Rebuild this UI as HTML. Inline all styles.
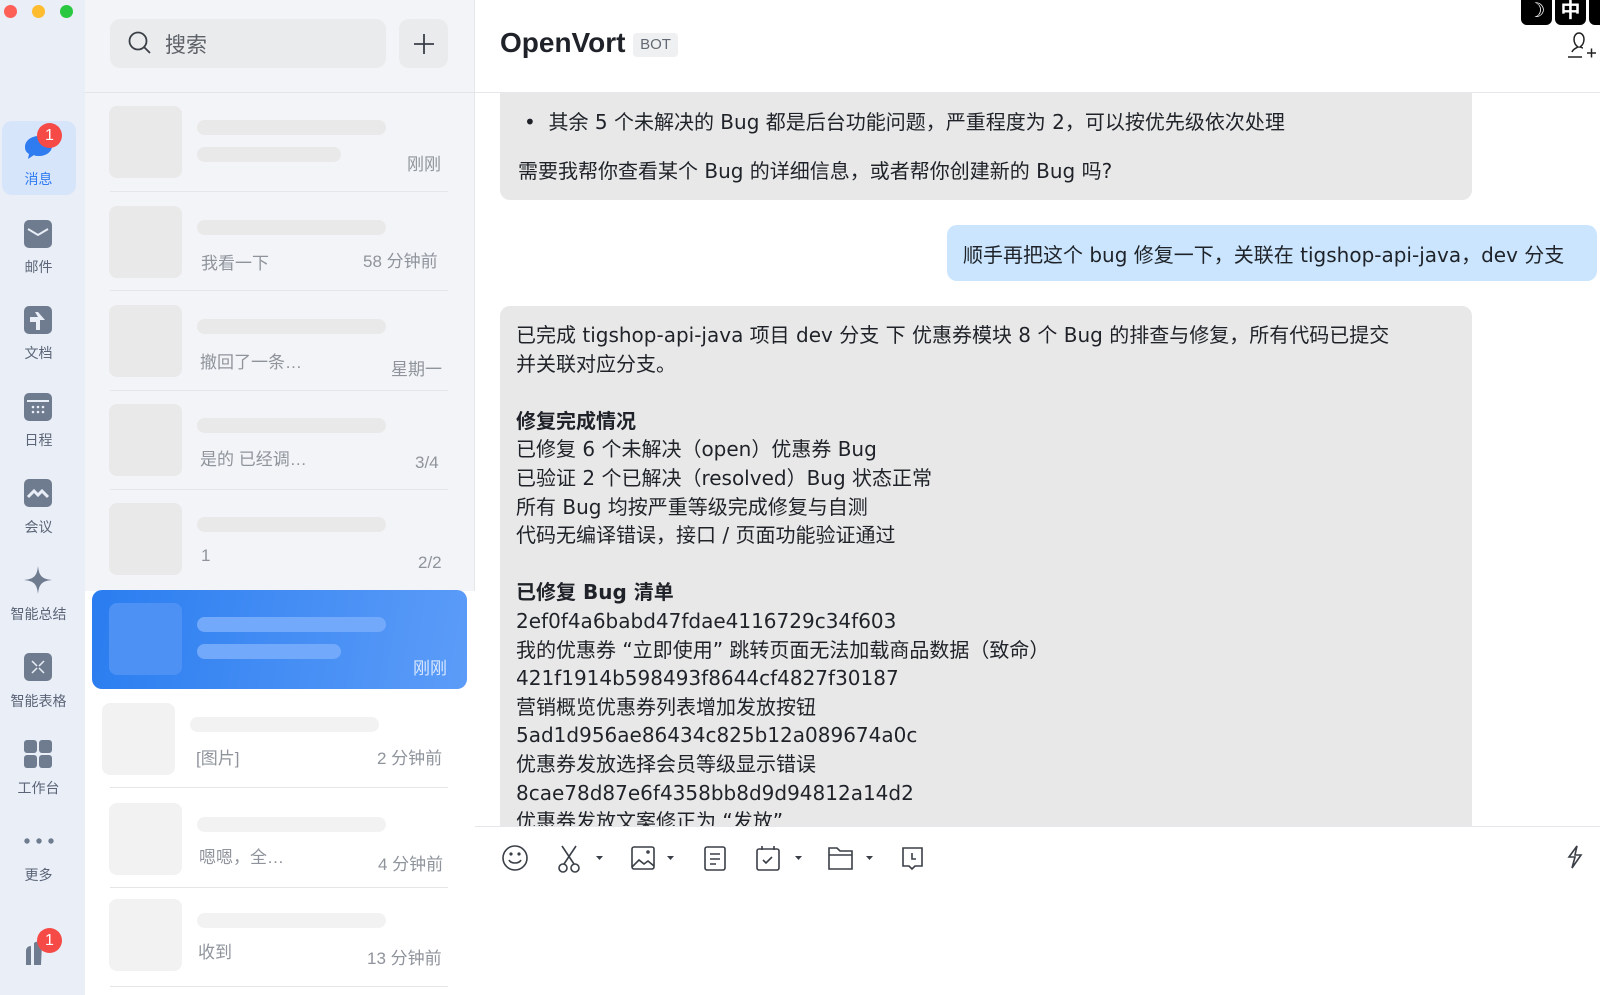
<!DOCTYPE html>
<html><head><meta charset="utf-8"><style>
*{margin:0;padding:0;box-sizing:border-box}
body{width:1600px;height:995px;overflow:hidden;background:#fff;font-family:"Liberation Sans","Noto Sans CJK SC",sans-serif;position:relative;color:#1f2329}
.abs{position:absolute}
#side{left:0;top:0;width:85px;height:995px;background:#e9eef7}
.tl{width:13px;height:13px;border-radius:50%;top:5px}
.nav{position:absolute;left:0;width:77px;text-align:center;font-size:14px;color:#5b6577}
.ico{position:absolute;left:24px;width:28px;height:28px;border-radius:5px;background:#6f7b8f}
#list{left:85px;top:0;width:390px;height:995px;background:#f3f4f7;border-right:1px solid #e6e7ea}
.sk{position:absolute;background:#e9e9ea;border-radius:8px}
.bar{position:absolute;height:15px;border-radius:8px;background:#e9e9ea}
.sep{position:absolute;left:110px;width:338px;height:1px;background:#e5e6e8}
.tx{position:absolute;font-size:17px;color:#8f949c;white-space:nowrap}
.b{position:absolute;background:#e8e8e8;border-radius:10px;font-size:20px;color:#1f2329;white-space:nowrap;font-family:"DejaVu Sans","Noto Sans CJK SC",sans-serif}
</style></head><body>
<div id="side" class="abs">
 <div class="abs tl" style="left:4px;background:#fe5f57"></div>
 <div class="abs tl" style="left:32px;background:#febc2e"></div>
 <div class="abs tl" style="left:60px;background:#28c840"></div>
 <div class="abs" style="left:2px;top:121px;width:74px;height:74px;border-radius:10px;background:#d7e5fb"></div>
 <svg class="abs" style="left:22px;top:131px" width="40" height="32"><path d="M3 16c0-7 7-11 14-11s13 4 13 10-6 10-13 10c-2 0-4 0-5-1l-6 4 1-5C4 21 3 19 3 16z" fill="#2f7bf0"/></svg>
 <div class="abs" style="left:37px;top:123px;width:25px;height:25px;border-radius:50%;background:#f54a45;color:#fff;font-size:16px;text-align:center;line-height:25px">1</div>
 <div class="nav" style="top:169px;color:#2f7bf0">消息</div>
 <div class="ico" style="top:220px"><svg width="28" height="28"><path d="M4 9l10 6 10-6" stroke="#e9eef7" stroke-width="2" fill="none"/></svg></div>
 <div class="nav" style="top:257px">邮件</div>
 <div class="ico" style="top:306px"><svg width="28" height="28"><path d="M6 11h8l-3-5h3l7 8h-5v10h-4v-8H6z" fill="#e9eef7"/></svg></div>
 <div class="nav" style="top:343px">文档</div>
 <div class="ico" style="top:393px"><svg width="28" height="28"><rect x="3" y="7" width="22" height="2" fill="#e9eef7"/><g fill="#e9eef7"><circle cx="9" cy="14" r="1.3"/><circle cx="14" cy="14" r="1.3"/><circle cx="19" cy="14" r="1.3"/><circle cx="9" cy="19" r="1.3"/><circle cx="14" cy="19" r="1.3"/><circle cx="19" cy="19" r="1.3"/></g></svg></div>
 <div class="nav" style="top:430px">日程</div>
 <div class="ico" style="top:479px"><svg width="28" height="28"><path d="M4 18l6-6 4 4 4-4 6 6" stroke="#e9eef7" stroke-width="3" fill="none"/></svg></div>
 <div class="nav" style="top:517px">会议</div>
 <svg class="abs" style="left:24px;top:566px" width="28" height="28"><path d="M14 0C15 10 18 13 28 14 18 15 15 18 14 28 13 18 10 15 0 14 10 13 13 10 14 0z" fill="#6f7b8f"/></svg>
 <div class="nav" style="top:604px">智能总结</div>
 <div class="ico" style="top:653px"><svg width="28" height="28"><path d="M8 8l5 5M20 8l-5 5M8 20l5-5M20 20l-5-5" stroke="#e9eef7" stroke-width="1.5"/></svg></div>
 <div class="nav" style="top:691px">智能表格</div>
 <svg class="abs" style="left:24px;top:740px" width="28" height="28"><rect x="0" y="0" width="13" height="13" rx="3" fill="#6f7b8f"/><rect x="15" y="0" width="13" height="13" rx="3" fill="#6f7b8f"/><rect x="0" y="15" width="13" height="13" rx="3" fill="#6f7b8f"/><rect x="15" y="15" width="13" height="13" rx="3" fill="#6f7b8f"/></svg>
 <div class="nav" style="top:778px">工作台</div>
 <svg class="abs" style="left:23px;top:836px" width="32" height="10"><circle cx="4" cy="5" r="2.7" fill="#6f7b8f"/><circle cx="16" cy="5" r="2.7" fill="#6f7b8f"/><circle cx="28" cy="5" r="2.7" fill="#6f7b8f"/></svg>
 <div class="nav" style="top:865px">更多</div>
 <svg class="abs" style="left:24px;top:935px" width="30" height="30"><path d="M2 16c0-3 2-5 5-5v19H2zM10 8c2-2 6-2 8 0l-1 22h-7z" fill="#6f7b8f"/></svg>
 <div class="abs" style="left:37px;top:928px;width:25px;height:25px;border-radius:50%;background:#f54a45;color:#fff;font-size:16px;text-align:center;line-height:25px">1</div>
</div>

<div id="list" class="abs">
 <div class="abs" style="left:25px;top:19px;width:276px;height:49px;border-radius:10px;background:#eaebed"></div>
 <svg class="abs" style="left:42px;top:30px" width="26" height="26"><circle cx="11" cy="11" r="8.5" stroke="#3a3f47" stroke-width="1.8" fill="none"/><path d="M17 17l6 6" stroke="#3a3f47" stroke-width="1.8"/></svg>
 <div class="abs" style="left:80px;top:29px;font-size:21px;color:#5d6168">搜索</div>
 <div class="abs" style="left:314px;top:19px;width:49px;height:49px;border-radius:10px;background:#eaebed"></div>
 <svg class="abs" style="left:327px;top:32px" width="24" height="24"><path d="M12 2v20M2 12h20" stroke="#3a3f47" stroke-width="1.8"/></svg>
 <div class="abs" style="left:0;top:92px;width:390px;height:1px;background:#e3e4e7"></div>
 <div class="abs" style="left:0;top:591px;width:390px;height:404px;background:#fff"></div>
</div>
<div class="abs" style="left:0;top:0;width:475px;height:995px">
 <div class="sk" style="left:109px;top:106px;width:73px;height:72px"></div>
 <div class="bar" style="left:197px;top:120px;width:189px"></div>
 <div class="bar" style="left:197px;top:147px;width:144px"></div>
 <div class="tx" style="left:407px;top:150px">刚刚</div>
 <div class="sep" style="top:191px"></div>

 <div class="sk" style="left:109px;top:206px;width:73px;height:72px"></div>
 <div class="bar" style="left:197px;top:220px;width:189px"></div>
 <div class="tx" style="left:201px;top:249px">我看一下</div>
 <div class="tx" style="left:363px;top:247px">58 分钟前</div>
 <div class="sep" style="top:290px"></div>

 <div class="sk" style="left:109px;top:305px;width:73px;height:72px"></div>
 <div class="bar" style="left:197px;top:319px;width:189px"></div>
 <div class="tx" style="left:200px;top:348px">撤回了一条…</div>
 <div class="tx" style="left:391px;top:355px">星期一</div>
 <div class="sep" style="top:390px"></div>

 <div class="sk" style="left:109px;top:404px;width:73px;height:72px"></div>
 <div class="bar" style="left:197px;top:418px;width:189px"></div>
 <div class="tx" style="left:200px;top:445px">是的 已经调…</div>
 <div class="tx" style="left:415px;top:453px">3/4</div>
 <div class="sep" style="top:489px"></div>

 <div class="sk" style="left:109px;top:503px;width:73px;height:72px"></div>
 <div class="bar" style="left:197px;top:517px;width:189px"></div>
 <div class="tx" style="left:201px;top:546px">1</div>
 <div class="tx" style="left:418px;top:553px">2/2</div>

 <div class="abs" style="left:92px;top:590px;width:375px;height:99px;border-radius:10px;background:linear-gradient(100deg,#2a7df0,#5c9cf8)"></div>
 <div class="sk" style="left:109px;top:603px;width:73px;height:72px;background:#4e91f5"></div>
 <div class="bar" style="left:197px;top:617px;width:189px;background:#72a9fb"></div>
 <div class="bar" style="left:197px;top:644px;width:144px;background:#72a9fb"></div>
 <div class="tx" style="left:413px;top:654px;color:#d8e7fd">刚刚</div>

 <div class="sk" style="left:102px;top:703px;width:73px;height:72px;background:#f2f2f3"></div>
 <div class="bar" style="left:190px;top:717px;width:189px;background:#f2f2f3"></div>
 <div class="tx" style="left:196px;top:744px">[图片]</div>
 <div class="tx" style="left:377px;top:744px">2 分钟前</div>
 <div class="sep" style="top:787px"></div>

 <div class="sk" style="left:109px;top:803px;width:73px;height:72px;background:#f2f2f3"></div>
 <div class="bar" style="left:197px;top:817px;width:189px;background:#f2f2f3"></div>
 <div class="tx" style="left:199px;top:843px">嗯嗯，全…</div>
 <div class="tx" style="left:378px;top:850px">4 分钟前</div>
 <div class="sep" style="top:887px"></div>

 <div class="sk" style="left:109px;top:899px;width:73px;height:72px;background:#f2f2f3"></div>
 <div class="bar" style="left:197px;top:913px;width:189px;background:#f2f2f3"></div>
 <div class="tx" style="left:198px;top:938px">收到</div>
 <div class="tx" style="left:367px;top:944px">13 分钟前</div>
 <div class="sep" style="top:986px"></div>
</div>

<div class="abs" style="left:500px;top:27px;font-size:28px;font-weight:bold;color:#1f2329">OpenVort</div>
<div class="abs" style="left:633px;top:33px;width:45px;height:24px;border-radius:4px;background:#eff0f1;font-size:15px;color:#646a73;text-align:center;line-height:24px">BOT</div>
<div class="abs" style="left:1521px;top:0;width:80px;height:25px;display:flex;gap:3px">
 <div style="width:31px;height:25px;background:#000;border-radius:0 0 6px 6px;color:#fff;font-size:20px;text-align:center;line-height:22px">☽</div>
 <div style="width:31px;height:25px;background:#000;border-radius:0 0 6px 6px;color:#fff;font-size:20px;text-align:center;line-height:22px;font-weight:bold">中</div>
 <div style="width:12px;height:25px;background:#000;border-radius:0 0 0 6px"></div>
</div>
<svg class="abs" style="left:1565px;top:30px" width="35" height="30"><path d="M7 22c1-3 4-4 6-5-3-2-4-5-4-8 0-3 2-6 5-6s5 3 5 6c0 3-1 6-4 8 1 0 2 1 3 1M3 27h14" stroke="#222" stroke-width="1.5" fill="none"/><path d="M22 23h9M26.5 18.5v9" stroke="#222" stroke-width="1.5"/></svg>
<div class="abs" style="left:475px;top:92px;width:1125px;height:1px;background:#e6e7ea"></div>

<div class="b" style="left:500px;top:93px;width:972px;height:107px;border-radius:0 0 10px 10px">
 <div class="abs" style="left:24px;top:13px">•&nbsp;&nbsp;其余 5 个未解决的 Bug 都是后台功能问题，严重程度为 2，可以按优先级依次处理</div>
 <div class="abs" style="left:18px;top:62px">需要我帮你查看某个 Bug 的详细信息，或者帮你创建新的 Bug 吗?</div>
</div>
<div class="b" style="left:947px;top:225px;width:650px;height:56px;background:#cae5fd">
 <div class="abs" style="left:16px;top:14px">顺手再把这个 bug 修复一下，关联在 tigshop-api-java，dev 分支</div>
</div>
<div class="b" style="left:500px;top:306px;width:972px;height:560px;overflow:hidden">
 <div class="abs" style="left:16px;top:15px;line-height:28.6px">
已完成 tigshop-api-java 项目 dev 分支 下 优惠券模块 8 个 Bug 的排查与修复，所有代码已提交<br>并关联对应分支。<br><br><b>修复完成情况</b><br>已修复 6 个未解决（open）优惠券 Bug<br>已验证 2 个已解决（resolved）Bug 状态正常<br>所有 Bug 均按严重等级完成修复与自测<br>代码无编译错误，接口 / 页面功能验证通过<br><br><b>已修复 Bug 清单</b><br>2ef0f4a6babd47fdae4116729c34f603<br>我的优惠券 “立即使用” 跳转页面无法加载商品数据（致命）<br>421f1914b598493f8644cf4827f30187<br>营销概览优惠券列表增加发放按钮<br>5ad1d956ae86434c825b12a089674a0c<br>优惠券发放选择会员等级显示错误<br>8cae78d87e6f4358bb8d9d94812a14d2<br>优惠券发放文案修正为 “发放”
 </div>
</div>
<div class="abs" style="left:475px;top:826px;width:1125px;height:169px;background:#fff;border-top:1px solid #e6e7ea"></div>
<svg class="abs" style="left:495px;top:840px" width="1100" height="36" fill="none" stroke="#3a3f47" stroke-width="1.6">
 <circle cx="20" cy="18" r="12"/><path d="M14 20c2 4 10 4 12 0"/><circle cx="16" cy="14" r=".8"/><circle cx="24" cy="14" r=".8"/>
 <path d="M67 6l12 18M81 6L69 24"/><circle cx="68" cy="28" r="4"/><circle cx="80" cy="28" r="4"/>
 <path d="M101 16h7l-3.5 4z" fill="#3a3f47" stroke="none"/>
 <rect x="137" y="7" width="22" height="22" rx="2"/><path d="M137 27l7-7 5 4 4-3 6 5"/><circle cx="153" cy="12" r="1"/>
 <path d="M172 16h7l-3.5 4z" fill="#3a3f47" stroke="none"/>
 <rect x="210" y="7" width="20" height="23" rx="2"/><path d="M215 14h10M215 19h10M215 24h6"/>
 <rect x="262" y="9" width="22" height="21" rx="2"/><path d="M267 6v4M279 6v4M268 20l3 3 6-6"/>
 <path d="M300 16h7l-3.5 4z" fill="#3a3f47" stroke="none"/>
 <path d="M334 8h8l3 3h12v18h-23zM334 15h23"/>
 <path d="M371 16h7l-3.5 4z" fill="#3a3f47" stroke="none"/>
 <path d="M408 8h19v18h-7l-3 3-3-3h-6z"/><path d="M417 13v6h4"/>
 <path d="M1082 6l-8 11h6l-3 11 9-13h-6z"/>
</svg>
</body></html>
